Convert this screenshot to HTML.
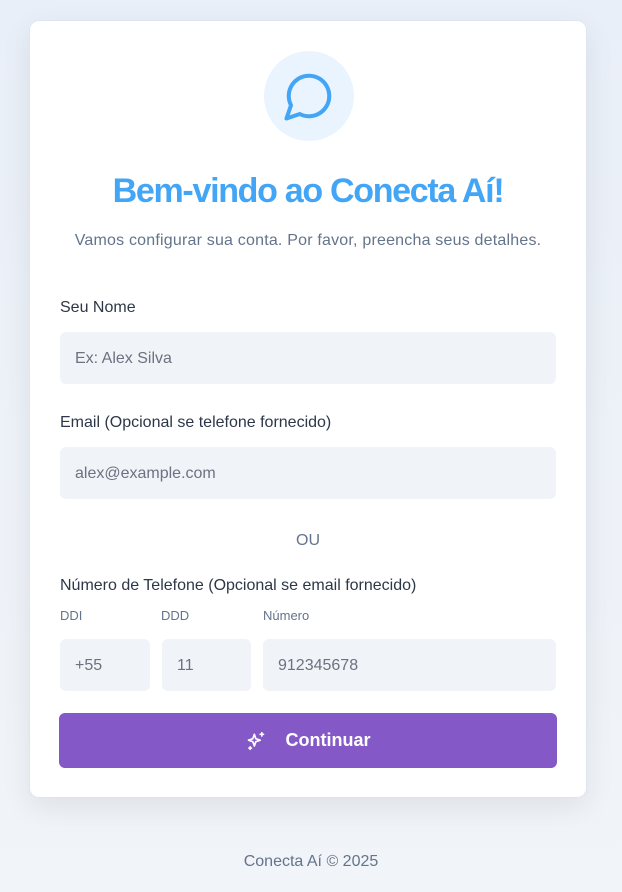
<!DOCTYPE html>
<html><head><meta charset="utf-8"><style>
*{box-sizing:border-box;margin:0;padding:0}
body{width:622px;height:892px;background:linear-gradient(180deg,#e9eff8,#f1f4f8);font-family:"Liberation Sans",sans-serif;position:relative;overflow:hidden}
.card{position:absolute;left:29px;top:20px;width:558px;height:778px;background:#fff;border-radius:10px;border:1px solid #dde6f0;box-shadow:0 10px 30px rgba(0,0,0,.08)}
.circ{position:absolute;left:234px;top:30px;width:90px;height:90px;border-radius:50%;background:#eaf4fe}
.circ svg{position:absolute;left:18px;top:18px}
.abs{position:absolute}
h1{position:absolute;left:0;width:100%;top:151px;text-align:center;font-size:34px;font-weight:bold;color:#42a5f5;letter-spacing:-1.3px}
.sub{left:0;width:100%;top:211px;text-align:center;font-size:16px;color:#64748b;letter-spacing:.2px}
.lab{font-size:16px;color:#2d3748;left:30px}
.sl{font-size:13px;color:#64748b}
.inp{background:#f0f3f7;border-radius:6px;height:52px;font-size:16px;color:#6b7280;padding:0 15px;line-height:54px}
.btn{left:29px;top:692px;width:498px;height:55px;background:#8558c8;border-radius:6px;color:#fff;font-weight:bold;font-size:18px;display:flex;align-items:center;justify-content:center;gap:20px}
</style></head><body>
<div class="card">
<div class="circ"><svg width="54" height="54" viewBox="0 0 24 24" fill="none" stroke="#42a5f5" stroke-width="1.8" stroke-linecap="round" stroke-linejoin="round"><path d="M7.9 20A9 9 0 1 0 4 16.1L2 22Z"/></svg></div>
<h1>Bem-vindo ao Conecta Aí!</h1>
<div class="abs sub">Vamos configurar sua conta. Por favor, preencha seus detalhes.</div>
<div class="abs lab" style="top:278px">Seu Nome</div>
<div class="abs inp" style="left:30px;top:311px;width:496px">Ex: Alex Silva</div>
<div class="abs lab" style="top:393px">Email (Opcional se telefone fornecido)</div>
<div class="abs inp" style="left:30px;top:426px;width:496px">alex@example.com</div>
<div class="abs" style="left:0;width:100%;top:511px;text-align:center;font-size:16px;color:#64748b">OU</div>
<div class="abs lab" style="top:556px">Número de Telefone (Opcional se email fornecido)</div>
<div class="abs sl" style="left:30px;top:587px">DDI</div>
<div class="abs sl" style="left:131px;top:587px">DDD</div>
<div class="abs sl" style="left:233px;top:587px">Número</div>
<div class="abs inp" style="left:30px;top:618px;width:90px">+55</div>
<div class="abs inp" style="left:132px;top:618px;width:89px">11</div>
<div class="abs inp" style="left:233px;top:618px;width:293px">912345678</div>
<div class="abs btn"><svg width="20" height="20" viewBox="0 0 24 24" fill="none" stroke="#fff" stroke-width="2" stroke-linejoin="round" stroke-linecap="round"><path d="M10 4l1.8 5.2L17 11l-5.2 1.8L10 18l-1.8-5.2L3 11l5.2-1.8z"/><path d="M19 2v4M17 4h4M5 19v3M3.5 20.5h3"/></svg><span>Continuar</span></div>
</div>
<div class="abs" style="left:0;width:100%;top:853px;text-align:center;font-size:16px;color:#64748b">Conecta Aí © 2025</div>
</body></html>
